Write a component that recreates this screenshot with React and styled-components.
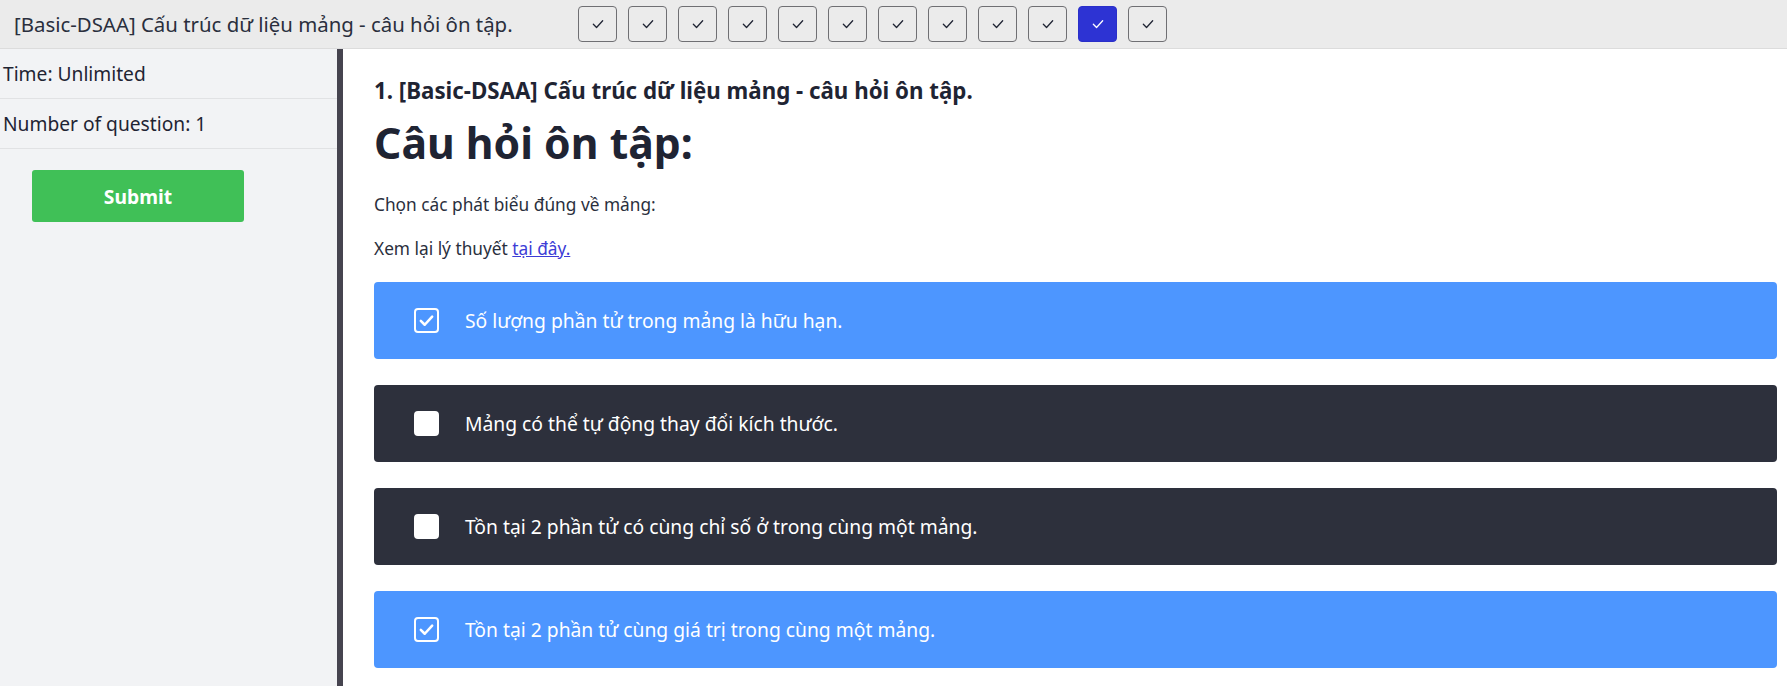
import React from 'react';
import styled, { createGlobalStyle } from 'styled-components';

const GlobalStyle = createGlobalStyle`
  html, body {
    margin: 0;
    padding: 0;
  }
  body {
    font-family: "Noto Sans", "Open Sans", sans-serif;
    color: #1f2433;
    background: #fff;
  }
  * {
    box-sizing: border-box;
  }
`;

const Page = styled.div`
  display: flex;
  flex-direction: column;
  height: 686px;
  overflow: hidden;
`;

const TopBar = styled.header`
  display: flex;
  align-items: center;
  height: 49px;
  padding: 0 0 0 14px;
  background: #ebebeb;
  border-bottom: 1px solid #dcdcdc;
`;

const TopTitle = styled.div`
  font-size: 20.4px;
  color: #2a2f3d;
  width: 564px;
  white-space: nowrap;
`;

const NavList = styled.div`
  display: flex;
  gap: 11px;
`;

const NavButton = styled.button`
  display: flex;
  align-items: center;
  justify-content: center;
  width: 39px;
  height: 36px;
  padding: 0;
  border-radius: 4px;
  border: 1px solid ${({ active }) => (active ? '#2a2fc9' : '#6f6f73')};
  background: ${({ active }) => (active ? '#2d33d3' : '#ebebeb')};
  color: ${({ active }) => (active ? '#fff' : '#1f2433')};
  cursor: pointer;
`;

const Body = styled.div`
  display: flex;
  flex: 1;
  min-height: 0;
`;

const Sidebar = styled.aside`
  width: 343px;
  flex-shrink: 0;
  background: #f2f3f5;
  border-right: 6px solid #46444f;
`;

const InfoRow = styled.div`
  height: 50px;
  display: flex;
  align-items: center;
  padding-left: 3px;
  font-size: 19.2px;
  color: #1f2433;
  border-bottom: 1px solid #e1e2e4;
`;

const SubmitButton = styled.button`
  display: block;
  margin: 21px 0 0 32px;
  width: 212px;
  height: 52px;
  border: none;
  border-radius: 3px;
  background: #40c057;
  color: #fff;
  font-family: inherit;
  font-size: 19.3px;
  font-weight: 700;
  cursor: pointer;
`;

const Main = styled.main`
  flex: 1;
  padding: 27px 10px 0 31px;
`;

const QuestionTitle = styled.h3`
  margin: 0;
  font-size: 22.3px;
  line-height: 30px;
  font-weight: 700;
  color: #1f2433;
`;

const Heading = styled.h2`
  margin: 13px 0 0;
  font-size: 42.7px;
  line-height: 48px;
  font-weight: 700;
  color: #1f2433;
`;

const Paragraph = styled.p`
  margin: ${({ gap }) => gap}px 0 0;
  font-size: 17.3px;
  line-height: 24px;
  color: #2a2f3d;
`;

const TheoryLink = styled.a`
  color: #3c3cd6;
  text-decoration: underline;
`;

const OptionList = styled.div`
  display: flex;
  flex-direction: column;
  gap: 26px;
  margin-top: 21px;
`;

const Option = styled.label`
  display: flex;
  align-items: center;
  gap: 26px;
  height: 77px;
  padding-left: 40px;
  border-radius: 4px;
  background: ${({ checked }) => (checked ? '#4d96ff' : '#2d303c')};
  color: #fff;
  font-size: 19.3px;
  cursor: pointer;
`;

const Box = styled.span`
  display: flex;
  align-items: center;
  justify-content: center;
  width: 25px;
  height: 25px;
  border-radius: 4px;
  border: 2px solid #fff;
  background: ${({ checked }) => (checked ? 'transparent' : '#fff')};
`;

const Tick = ({ size = 12, width = 2 }) => (
  <svg width={size} height={size} viewBox="0 0 24 24" fill="none" stroke="currentColor" strokeWidth={width} strokeLinecap="round" strokeLinejoin="round">
    <polyline points="4 12.5 9.5 18 20 6.5" />
  </svg>
);

const options = [
  { text: 'Số lượng phần tử trong mảng là hữu hạn.', checked: true },
  { text: 'Mảng có thể tự động thay đổi kích thước.', checked: false },
  { text: 'Tồn tại 2 phần tử có cùng chỉ số ở trong cùng một mảng.', checked: false },
  { text: 'Tồn tại 2 phần tử cùng giá trị trong cùng một mảng.', checked: true },
];

const App = () => (
  <Page>
    <GlobalStyle />
    <TopBar>
      <TopTitle>[Basic-DSAA] Cấu trúc dữ liệu mảng - câu hỏi ôn tập.</TopTitle>
      <NavList>
        {Array.from({ length: 12 }, (_, i) => (
          <NavButton key={i} active={i === 10}>
            <Tick size={14} width={2.2} />
          </NavButton>
        ))}
      </NavList>
    </TopBar>
    <Body>
      <Sidebar>
        <InfoRow>Time: Unlimited</InfoRow>
        <InfoRow>Number of question: 1</InfoRow>
        <SubmitButton>Submit</SubmitButton>
      </Sidebar>
      <Main>
        <QuestionTitle>1. [Basic-DSAA] Cấu trúc dữ liệu mảng - câu hỏi ôn tập.</QuestionTitle>
        <Heading>Câu hỏi ôn tập:</Heading>
        <Paragraph gap={26}>Chọn các phát biểu đúng về mảng:</Paragraph>
        <Paragraph gap={20}>
          Xem lại lý thuyết <TheoryLink href="#">tại đây.</TheoryLink>
        </Paragraph>
        <OptionList>
          {options.map((o) => (
            <Option key={o.text} checked={o.checked}>
              <Box checked={o.checked}>{o.checked && <Tick size={17} width={3.6} />}</Box>
              {o.text}
            </Option>
          ))}
        </OptionList>
      </Main>
    </Body>
  </Page>
);

export default App;
